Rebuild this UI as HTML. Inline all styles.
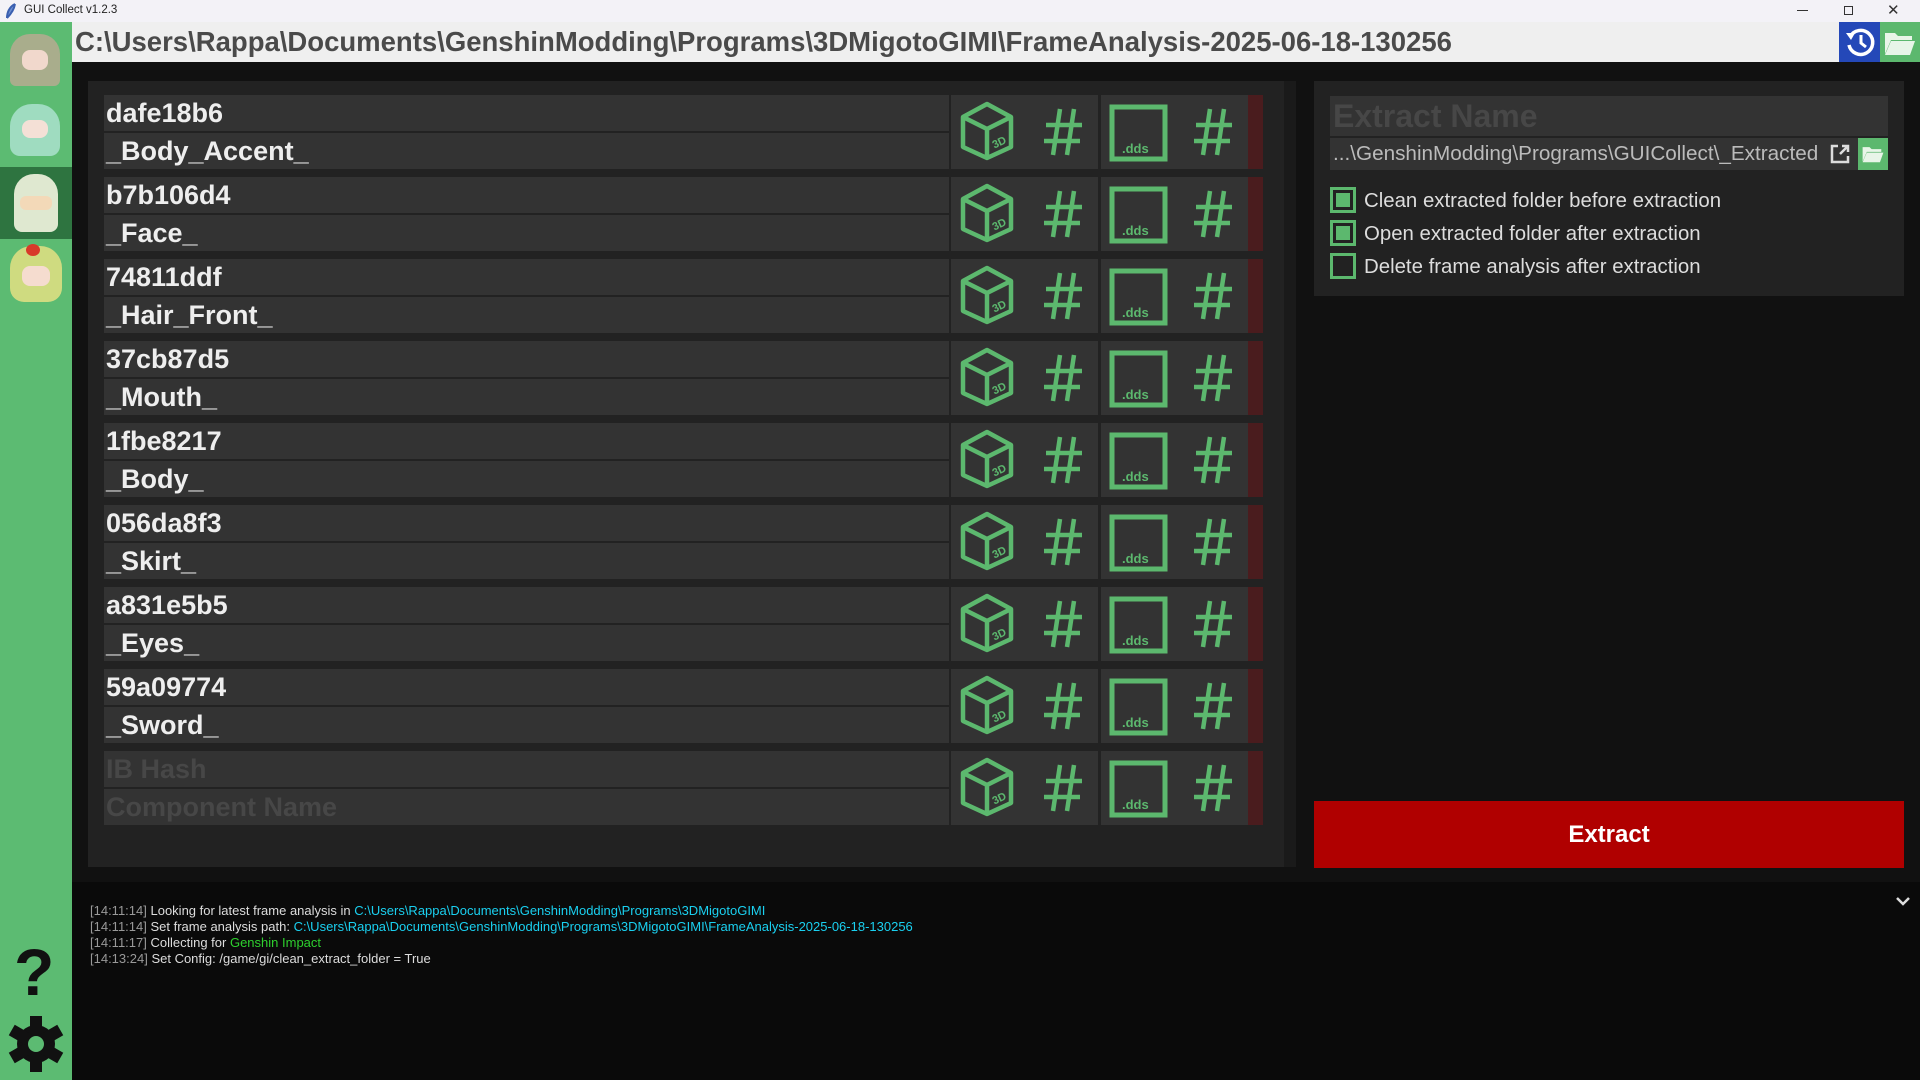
<!DOCTYPE html>
<html><head><meta charset="utf-8"><style>
*{margin:0;padding:0;box-sizing:border-box}
body{width:1920px;height:1080px;overflow:hidden;background:#111;font-family:"Liberation Sans",sans-serif;position:relative}
.a{position:absolute}
.f{background:#333;color:#eee;font-weight:bold;font-size:27px;padding-left:2px;line-height:36px;white-space:nowrap;overflow:hidden}
.ib{background:#333}
.cb{position:absolute;left:1330px;width:26px;height:26px;border:3px solid #5cb86e}
.cb i{position:absolute;left:3px;top:3px;width:14px;height:14px;background:#5cb86e}
.ct{position:absolute;left:1364px;font-size:20.4px;color:#ddd}
.log{position:absolute;left:90px;font-size:13px;color:#ddd;white-space:nowrap}
.log span.t{color:#999}
.log span.c{color:#1ad0f0}
.log span.g{color:#2ed02e}
</style></head><body>
<div class="a" style="left:0;top:0;width:1920px;height:22px;background:#f3f2f7"></div>
<svg class="a" style="left:5px;top:3px" width="12" height="16"><path d="M10 1 C4 4 2 10 2 15 M10 1 C9 7 6 11 2 15" stroke="#3a5fb0" stroke-width="2" fill="#6d8fd0"/></svg>
<div class="a" style="left:24px;top:4px;font-size:11.5px;color:#222">GUI Collect v1.2.3</div>
<div class="a" style="left:1797px;top:10px;width:11px;height:1px;background:#333"></div>
<div class="a" style="left:1844px;top:6px;width:9px;height:9px;border:1px solid #333"></div>
<div class="a" style="left:1887px;top:1px;font-size:15px;color:#333">✕</div>
<div class="a" style="left:72px;top:22px;width:1848px;height:40px;background:#efefef"></div>
<div class="a" style="left:75px;top:26px;font-size:27.5px;font-weight:bold;color:#4a4a4a;white-space:nowrap">C:\Users\Rappa\Documents\GenshinModding\Programs\3DMigotoGIMI\FrameAnalysis-2025-06-18-130256</div>
<div class="a" style="left:1839px;top:22px;width:41px;height:40px;background:#2448b8"></div>
<svg class="a" style="left:1843px;top:25px" width="34" height="34" viewBox="0 0 34 34"><path d="M7 12 A12 12 0 1 1 6 20" stroke="#fff" stroke-width="3.5" fill="none"/><path d="M3 8 L8 15 L12 8Z" fill="#fff"/><path d="M18 10 V18 L23 22" stroke="#fff" stroke-width="3" fill="none"/></svg>
<div class="a" style="left:1880px;top:22px;width:40px;height:40px;background:#5cb86e"></div>
<svg class="a" style="left:1884px;top:30px" width="32" height="26" viewBox="0 0 32 26"><path d="M1 3 H11 L14 6 H28 V10 H7 L1 24Z" fill="#e8f5e8"/><path d="M7 11 H31 L26 25 H1Z" fill="#e8f5e8"/></svg>
<!-- sidebar -->
<div class="a" style="left:0;top:22px;width:72px;height:1058px;background:#5cbb72"></div>
<div class="a" style="left:0;top:167px;width:72px;height:72px;background:#2e7440"></div>
<div class="a" style="left:10px;top:34px;width:50px;height:52px;border-radius:20px 20px 6px 6px;background:#a9ad8c"></div>
<div class="a" style="left:22px;top:50px;width:26px;height:20px;border-radius:8px;background:#f1d8cc"></div>
<div class="a" style="left:10px;top:104px;width:50px;height:52px;border-radius:22px 22px 10px 10px;background:#9fdcc0"></div>
<div class="a" style="left:22px;top:120px;width:26px;height:18px;border-radius:8px;background:#f4e0d6"></div>
<div class="a" style="left:14px;top:174px;width:44px;height:58px;border-radius:20px 20px 8px 8px;background:#dfe8d0"></div>
<div class="a" style="left:20px;top:196px;width:32px;height:14px;border-radius:6px;background:#f3d9b8"></div>
<div class="a" style="left:10px;top:246px;width:52px;height:56px;border-radius:22px 22px 14px 14px;background:#cfdb80"></div>
<div class="a" style="left:26px;top:244px;width:14px;height:12px;border-radius:50%;background:#d83a2a"></div>
<div class="a" style="left:22px;top:266px;width:28px;height:20px;border-radius:8px;background:#f5dccf"></div>
<div class="a" style="left:14px;top:937px;font-size:66px;font-weight:bold;color:#111;line-height:70px">?</div>
<svg class="a" style="left:8px;top:1014px" width="56" height="60" viewBox="0 0 56 60"><g fill="#111" transform="translate(28 30)"><circle r="19"/><rect x="-6" y="-28" width="12" height="56"/><rect x="-6" y="-28" width="12" height="56" transform="rotate(60)"/><rect x="-6" y="-28" width="12" height="56" transform="rotate(-60)"/></g><circle cx="28" cy="30" r="8" fill="#5cbb72"/></svg>
<!-- left panel -->
<div class="a" style="left:88px;top:81px;width:1196px;height:786px;background:#222"></div>
<div class="a" style="left:1284px;top:81px;width:12px;height:786px;background:#1a1a1a"></div>
<div id="rows"></div>
<!-- right panel -->
<div class="a" style="left:1314px;top:81px;width:590px;height:215px;background:#222"></div>
<div class="a" style="left:1330px;top:96px;width:558px;height:40px;background:#333;color:#474747;font-weight:bold;font-size:32px;line-height:40px;padding-left:3px">Extract Name</div>
<div class="a" style="left:1330px;top:138px;width:528px;height:32px;background:#333;color:#bbb;font-size:20.7px;line-height:32px;padding-left:3px;white-space:nowrap">...\GenshinModding\Programs\GUICollect\_Extracted</div>
<svg class="a" style="left:1829px;top:143px" width="22" height="22" viewBox="0 0 22 22"><path d="M9 3 H3 V19 H19 V13" stroke="#ddd" stroke-width="2.5" fill="none"/><path d="M11 11 L19 3 M13 3 H19 V9" stroke="#ddd" stroke-width="2.5" fill="none"/></svg>
<div class="a" style="left:1858px;top:138px;width:30px;height:32px;background:#5cb86e"></div>
<svg class="a" style="left:1861px;top:145px" width="24" height="18" viewBox="0 0 32 26"><path d="M1 3 H11 L14 6 H28 V10 H7 L1 24Z" fill="#e8f5e8"/><path d="M7 11 H31 L26 25 H1Z" fill="#e8f5e8"/></svg>
<div class="cb" style="top:187px"><i></i></div><div class="ct" style="top:190px">Clean extracted folder before extraction</div>
<div class="cb" style="top:220px"><i></i></div><div class="ct" style="top:223px">Open extracted folder after extraction</div>
<div class="cb" style="top:253px"></div><div class="ct" style="top:256px">Delete frame analysis after extraction</div>
<div class="a" style="left:1314px;top:801px;width:590px;height:67px;background:#b00000;color:#fff;font-weight:bold;font-size:24px;text-align:center;line-height:67px">Extract</div>
<!-- log -->
<div class="a" style="left:72px;top:882px;width:1848px;height:198px;background:#0a0a0a"></div>
<svg class="a" style="left:1896px;top:896px" width="14" height="10"><path d="M1 2 L7 8 L13 2" stroke="#ddd" stroke-width="2.5" fill="none"/></svg>
<div class="log" style="top:903px"><span class="t">[14:11:14]</span> Looking for latest frame analysis in <span class="c">C:\Users\Rappa\Documents\GenshinModding\Programs\3DMigotoGIMI</span></div>
<div class="log" style="top:919px"><span class="t">[14:11:14]</span> Set frame analysis path: <span class="c">C:\Users\Rappa\Documents\GenshinModding\Programs\3DMigotoGIMI\FrameAnalysis-2025-06-18-130256</span></div>
<div class="log" style="top:935px"><span class="t">[14:11:17]</span> Collecting for <span class="g">Genshin Impact</span></div>
<div class="log" style="top:951px"><span class="t">[14:13:24]</span> Set Config: /game/gi/clean_extract_folder = True</div>
<script>
var rows=[["dafe18b6","_Body_Accent_"],["b7b106d4","_Face_"],["74811ddf","_Hair_Front_"],["37cb87d5","_Mouth_"],["1fbe8217","_Body_"],["056da8f3","_Skirt_"],["a831e5b5","_Eyes_"],["59a09774","_Sword_"],["IB Hash","Component Name"]];
var h="";
rows.forEach(function(r,i){
 var y=95+i*82; var ph=i==8; var col=ph?"color:#474747":"";
 h+='<div class="a f" style="left:104px;top:'+y+'px;width:845px;height:36px;'+col+'">'+r[0]+'</div>';
 h+='<div class="a f" style="left:104px;top:'+(y+38)+'px;width:845px;height:36px;'+col+'">'+r[1]+'</div>';
 h+='<div class="a ib" style="left:951px;top:'+y+'px;width:147px;height:74px"></div>';
 h+='<div class="a ib" style="left:1101px;top:'+y+'px;width:147px;height:74px"></div>';
 h+='<div class="a" style="left:1248px;top:'+y+'px;width:15px;height:74px;background:#4a1c1e"></div>';
 h+='<svg class="a" style="left:951px;top:'+y+'px" width="312" height="74" viewBox="0 0 312 74">'+
 '<g stroke="#5cb86e" stroke-width="4.5" fill="none" stroke-linejoin="round"><path d="M36 9 L60 22 L60 52 L36 63 L12 52 L12 22Z M12 22 L36 34 L60 22 M36 34 L36 63"/></g>'+
 '<text x="41" y="51" fill="#5cb86e" font-size="11" font-weight="bold" font-family="Liberation Sans" transform="rotate(-25 48 47)">3D</text>'+
 '<g stroke="#5cb86e" stroke-width="4.5"><path d="M109 14 L102 60 M123 14 L116 60 M95 30 H131 M93 46 H129"/></g>'+
 '<rect x="161" y="12" width="53" height="52" stroke="#5cb86e" stroke-width="5" fill="none"/>'+
 '<text x="171" y="58" fill="#5cb86e" font-size="13" font-weight="bold" font-family="Liberation Sans">.dds</text>'+
 '<g stroke="#5cb86e" stroke-width="4.5"><path d="M259 14 L252 60 M273 14 L266 60 M245 30 H281 M243 46 H279"/></g></svg>';
});
document.getElementById("rows").innerHTML=h;
</script>
</body></html>
